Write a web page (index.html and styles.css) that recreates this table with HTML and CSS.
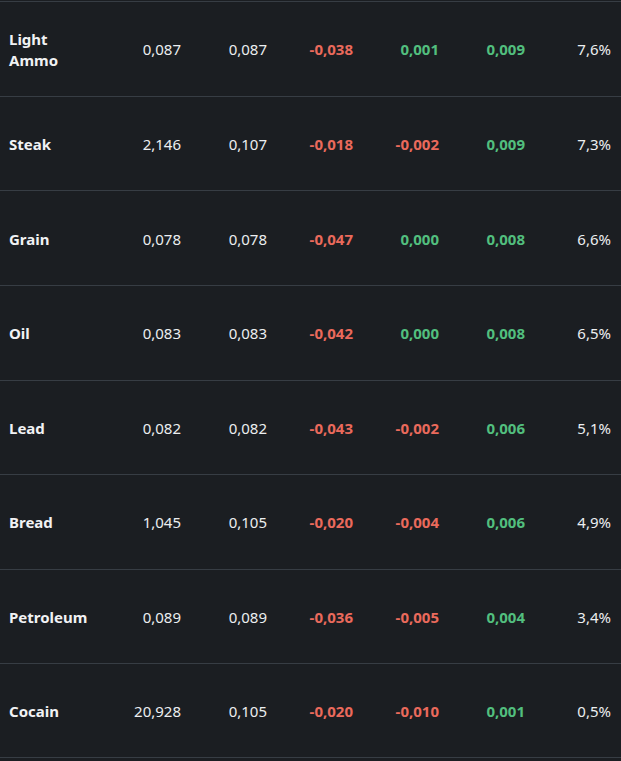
FILE: index.html
```html
<!DOCTYPE html>
<html lang="en">
<head>
<meta charset="utf-8">
<title>Resources</title>
<link rel="stylesheet" href="styles.css">
</head>
<body>
<div class="table">
  <div class="row"><div class="name">Light Ammo</div><div class="num">0,087</div><div class="num">0,087</div><div class="num neg">-0,038</div><div class="num pos">0,001</div><div class="num pos">0,009</div><div class="num">7,6%</div></div>
  <div class="row"><div class="name">Steak</div><div class="num">2,146</div><div class="num">0,107</div><div class="num neg">-0,018</div><div class="num neg">-0,002</div><div class="num pos">0,009</div><div class="num">7,3%</div></div>
  <div class="row"><div class="name">Grain</div><div class="num">0,078</div><div class="num">0,078</div><div class="num neg">-0,047</div><div class="num pos">0,000</div><div class="num pos">0,008</div><div class="num">6,6%</div></div>
  <div class="row"><div class="name">Oil</div><div class="num">0,083</div><div class="num">0,083</div><div class="num neg">-0,042</div><div class="num pos">0,000</div><div class="num pos">0,008</div><div class="num">6,5%</div></div>
  <div class="row"><div class="name">Lead</div><div class="num">0,082</div><div class="num">0,082</div><div class="num neg">-0,043</div><div class="num neg">-0,002</div><div class="num pos">0,006</div><div class="num">5,1%</div></div>
  <div class="row"><div class="name">Bread</div><div class="num">1,045</div><div class="num">0,105</div><div class="num neg">-0,020</div><div class="num neg">-0,004</div><div class="num pos">0,006</div><div class="num">4,9%</div></div>
  <div class="row"><div class="name">Petroleum</div><div class="num">0,089</div><div class="num">0,089</div><div class="num neg">-0,036</div><div class="num neg">-0,005</div><div class="num pos">0,004</div><div class="num">3,4%</div></div>
  <div class="row last"><div class="name">Cocain</div><div class="num">20,928</div><div class="num">0,105</div><div class="num neg">-0,020</div><div class="num neg">-0,010</div><div class="num pos">0,001</div><div class="num">0,5%</div></div>
</div>
</body>
</html>
```
FILE: styles.css
```css
html, body {
  margin: 0;
  padding: 0;
  background: #1b1e22;
}
body {
  font-family: "Noto Sans", "Open Sans", "Liberation Sans", sans-serif;
  font-size: 15px;
  line-height: 21px;
  color: #eceef0;
  width: 621px;
  height: 761px;
  overflow: hidden;
}
.table {
  padding-top: 1px;
}
.row {
  display: grid;
  grid-template-columns: 105px repeat(6, 86px);
  align-items: center;
  height: 94.625px;
  box-sizing: border-box;
  border-top: 1px solid #373d44;
  padding-top: 2px;
}
.row.last {
  border-bottom: 1px solid #373d44;
}
.name {
  font-weight: 700;
  padding-left: 9px;
  padding-right: 8px;
  color: #f1f2f4;
}
.num {
  text-align: right;
  padding-right: 10px;
}
.neg {
  color: #ea6a5c;
  font-weight: 700;
}
.pos {
  color: #52bf7e;
  font-weight: 700;
}
```
